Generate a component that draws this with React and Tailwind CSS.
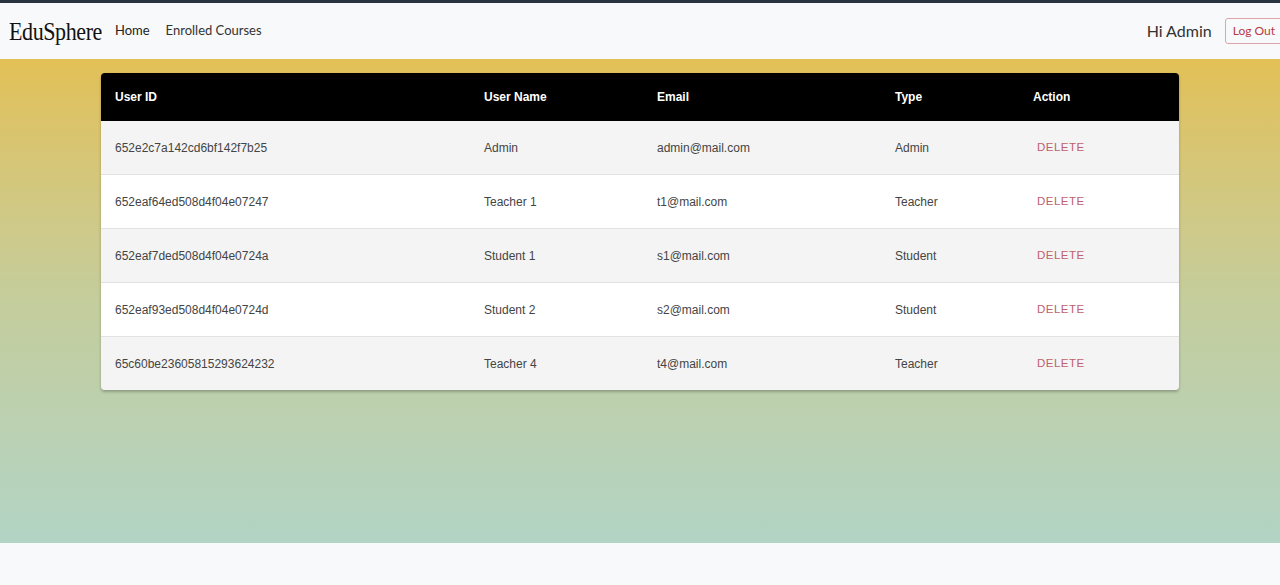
import React from "react";

const rows = [
  ["652e2c7a142cd6bf142f7b25", "Admin", "admin@mail.com", "Admin"],
  ["652eaf64ed508d4f04e07247", "Teacher 1", "t1@mail.com", "Teacher"],
  ["652eaf7ded508d4f04e0724a", "Student 1", "s1@mail.com", "Student"],
  ["652eaf93ed508d4f04e0724d", "Student 2", "s2@mail.com", "Student"],
  ["65c60be23605815293624232", "Teacher 4", "t4@mail.com", "Teacher"],
];

export default function App() {
  return (
    <div className="w-[1280px] h-[585px] flex flex-col overflow-hidden border-t-[3px] border-[#283241]">
      <nav className="h-[56px] shrink-0 bg-[#f8f9fa] flex items-center px-[9px]">
        <div className="flex items-center">
          <span className="text-[22px] text-[#111] tracking-[-0.4px] font-['Liberation_Serif',serif] scale-y-[1.12]">EduSphere</span>
          <a className="ml-[13px] text-[13px] text-[#222] font-['Lato',sans-serif]">Home</a>
          <a className="ml-[16px] text-[13px] text-[#333] font-['Lato',sans-serif]">Enrolled Courses</a>
        </div>
        <div className="ml-auto flex items-center">
          <span className="text-[16px] text-[#333] font-['Lato',sans-serif]">Hi Admin</span>
          <button className="ml-[13px] mr-[-12px] h-[26px] px-[7px] border border-[#dca5a9] rounded-[3px] text-[12px] text-[#b53a45] font-['Lato',sans-serif] bg-transparent">Log Out</button>
        </div>
      </nav>
      <main className="flex-1 bg-gradient-to-b from-[#e2c055] via-[#c4cd9c] to-[#b2d4c5] pt-[14px]">
        <div className="mx-auto w-[1078px] rounded-[4px] overflow-hidden shadow-[0_2px_3px_rgba(0,0,0,0.25)] font-['Liberation_Sans',Arial,sans-serif] text-[12px]">
          <div className="grid grid-cols-[369px_173px_238px_138px_146px] h-[48px] items-center bg-black text-white font-bold pl-[14px]">
            <div>User ID</div>
            <div>User Name</div>
            <div>Email</div>
            <div>Type</div>
            <div>Action</div>
          </div>
          {rows.map((r, i) => (
            <div
              key={r[0]}
              className={`grid grid-cols-[369px_173px_238px_138px_146px] items-center pl-[14px] text-[#444] ${i % 2 === 0 ? "bg-[#f4f4f4]" : "bg-white"} ${i < rows.length - 1 ? "h-[54px] border-b border-[#e2e2e2]" : "h-[53px]"}`}
            >
              <div>{r[0]}</div>
              <div>{r[1]}</div>
              <div>{r[2]}</div>
              <div>{r[3]}</div>
              <div className="pl-[4px] text-[11.5px] tracking-[0.5px] text-[#c0616b]">DELETE</div>
            </div>
          ))}
        </div>
      </main>
      <footer className="h-[42px] shrink-0 bg-[#f8f9fa]" />
    </div>
  );
}
